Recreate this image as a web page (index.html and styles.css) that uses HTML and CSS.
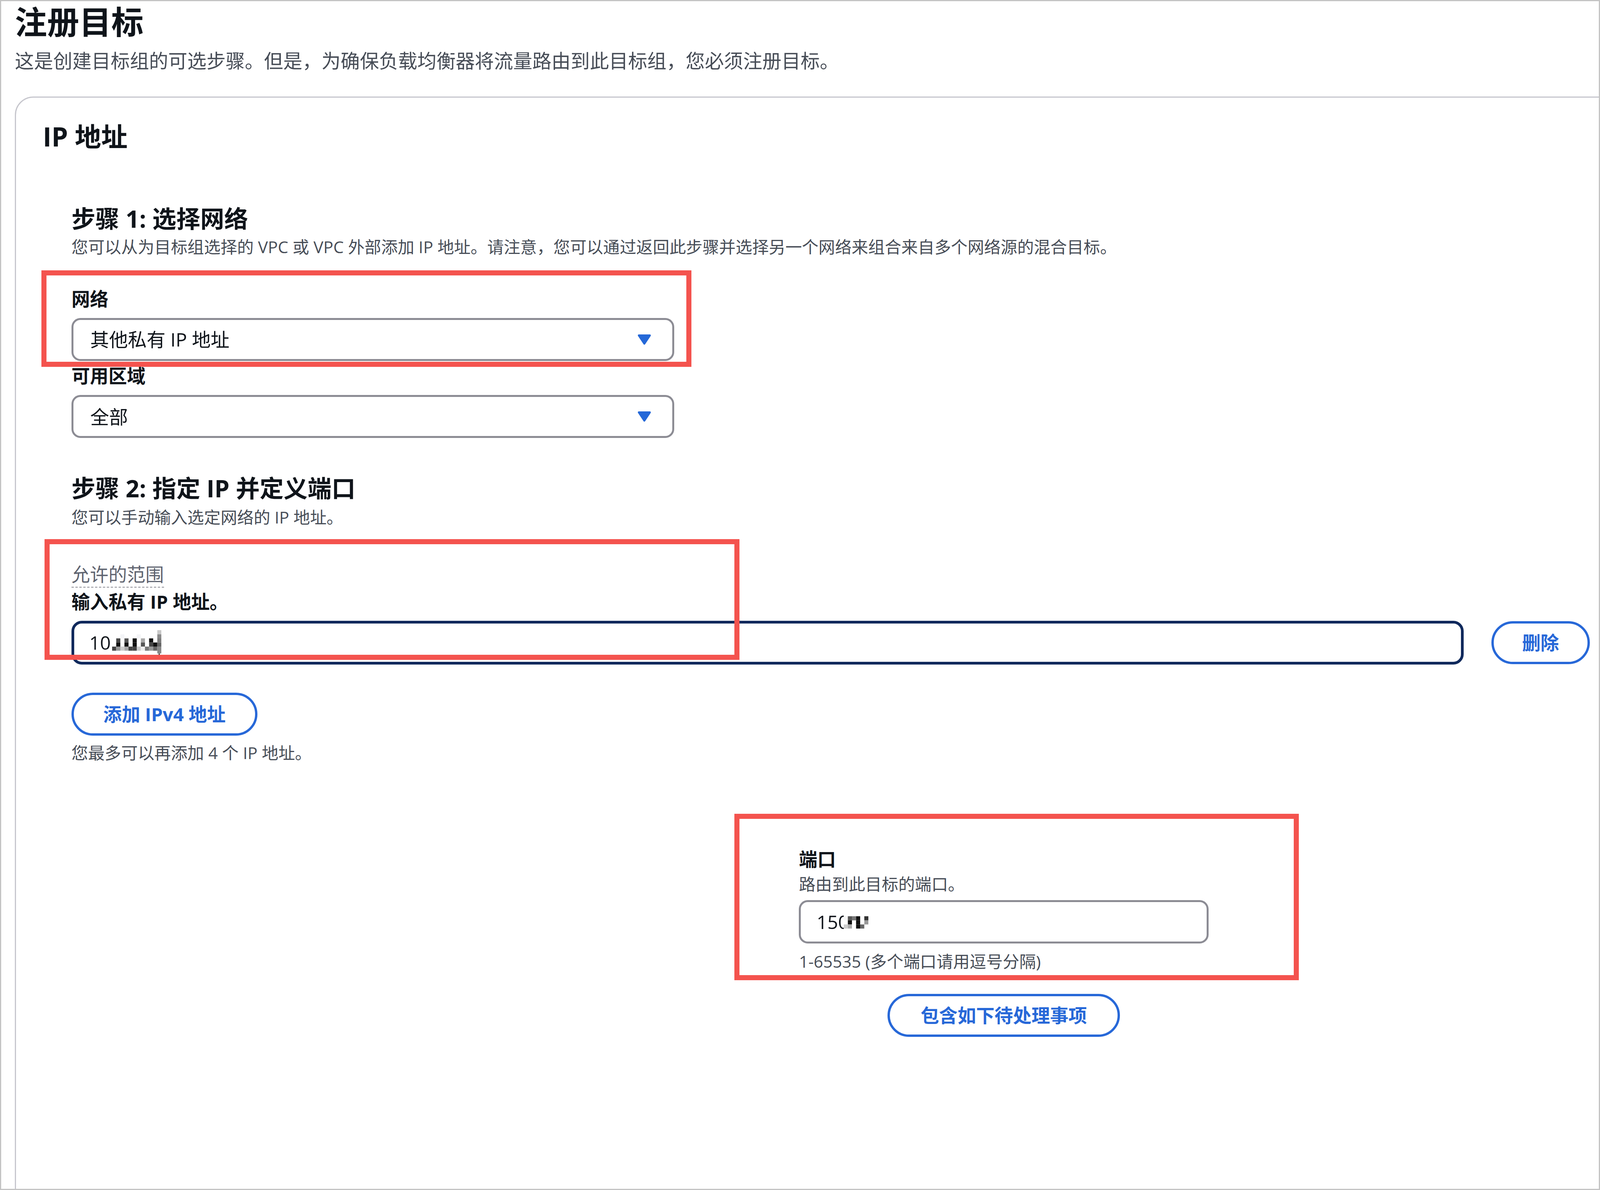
FILE: index.html
```html
<!DOCTYPE html>
<html lang="zh-CN">
<head>
<meta charset="utf-8">
<title>注册目标</title>
<link rel="stylesheet" href="styles.css">
</head>
<body>
<div class="page">
  <header class="page-head">
    <h1 class="title">注册目标</h1>
    <p class="subtitle">这是创建目标组的可选步骤。但是，为确保负载均衡器将流量路由到此目标组，您必须注册目标。</p>
  </header>

  <section class="card">
    <h2 class="card-title">IP 地址</h2>
    <div class="card-body">
      <div class="step">
        <h3 class="step-title">步骤 1: 选择网络</h3>
        <p class="desc">您可以从为目标组选择的 VPC 或 VPC 外部添加 IP 地址。请注意，您可以通过返回此步骤并选择另一个网络来组合来自多个网络源的混合目标。</p>
      </div>

      <div class="field field-network">
        <div class="field-label">网络</div>
        <div class="select">
          <span class="select-value">其他私有 IP 地址</span>
          <svg class="caret" viewBox="0 0 40 32"><polygon points="4,4 36,4 20,28" fill="#2568d8" stroke="#2568d8" stroke-width="6" stroke-linejoin="round"/></svg>
        </div>
      </div>

      <div class="field field-zone">
        <div class="field-label">可用区域</div>
        <div class="select">
          <span class="select-value">全部</span>
          <svg class="caret" viewBox="0 0 40 32"><polygon points="4,4 36,4 20,28" fill="#2568d8" stroke="#2568d8" stroke-width="6" stroke-linejoin="round"/></svg>
        </div>
      </div>

      <div class="step step-two">
        <h3 class="step-title">步骤 2: 指定 IP 并定义端口</h3>
        <p class="desc">您可以手动输入选定网络的 IP 地址。</p>
      </div>

      <div class="field field-ip">
        <div class="info-label"><span class="info-link">允许的范围</span></div>
        <div class="field-label field-label-tight">输入私有 IP 地址。</div>
        <div class="ip-row">
          <div class="input input-focused">
            <span class="input-value">10</span>
            <svg class="mosaic mosaic-ip" viewBox="0 0 144 72">
              <rect x="132" y="0" width="12" height="12" fill="#c8c8c8"/>
              <rect x="24" y="12" width="12" height="12" fill="#f4f5f7"/>
              <rect x="72" y="12" width="12" height="12" fill="#f4f5f7"/>
              <rect x="132" y="12" width="12" height="12" fill="#8a8a8a"/>
              <rect x="12" y="24" width="12" height="12" fill="#464646"/>
              <rect x="36" y="24" width="12" height="12" fill="#555555"/>
              <rect x="60" y="24" width="12" height="12" fill="#111111"/>
              <rect x="84" y="24" width="12" height="12" fill="#a8a8a8"/>
              <rect x="108" y="24" width="12" height="12" fill="#111111"/>
              <rect x="132" y="24" width="12" height="12" fill="#7d7d7d"/>
              <rect x="12" y="36" width="12" height="12" fill="#111111"/>
              <rect x="36" y="36" width="12" height="12" fill="#111111"/>
              <rect x="60" y="36" width="12" height="12" fill="#111111"/>
              <rect x="84" y="36" width="12" height="12" fill="#555555"/>
              <rect x="108" y="36" width="12" height="12" fill="#444444"/>
              <rect x="120" y="36" width="12" height="12" fill="#111111"/>
              <rect x="132" y="36" width="12" height="12" fill="#666666"/>
              <rect x="0" y="48" width="12" height="12" fill="#444444"/>
              <rect x="12" y="48" width="12" height="12" fill="#999999"/>
              <rect x="24" y="48" width="12" height="12" fill="#cccccc"/>
              <rect x="36" y="48" width="12" height="12" fill="#aaaaaa"/>
              <rect x="48" y="48" width="12" height="12" fill="#444444"/>
              <rect x="60" y="48" width="12" height="12" fill="#444444"/>
              <rect x="72" y="48" width="12" height="12" fill="#cccccc"/>
              <rect x="84" y="48" width="12" height="12" fill="#eeeeee"/>
              <rect x="96" y="48" width="12" height="12" fill="#777777"/>
              <rect x="108" y="48" width="12" height="12" fill="#999999"/>
              <rect x="120" y="48" width="12" height="12" fill="#666666"/>
              <rect x="132" y="48" width="12" height="20" fill="#888888"/>
              <rect x="136" y="68" width="3" height="4" fill="#222222"/>
            </svg>
          </div>
          <button class="btn btn-remove" type="button">删除</button>
        </div>
      </div>

      <div class="field field-add">
        <button class="btn btn-add" type="button">添加 IPv4 地址</button>
        <p class="desc desc-hint">您最多可以再添加 4 个 IP 地址。</p>
      </div>

      <div class="port">
        <div class="field-label">端口</div>
        <p class="desc port-desc">路由到此目标的端口。</p>
        <div class="input input-port">
          <span class="input-value">150</span>
          <svg class="mosaic mosaic-port" viewBox="0 0 72 44">
            <rect x="0" y="0" width="72" height="44" fill="#ffffff"/>
            <rect x="0" y="6" width="12" height="12" fill="#f6f6f6"/>
            <rect x="12" y="6" width="12" height="12" fill="#555555"/>
            <rect x="24" y="6" width="12" height="12" fill="#777777"/>
            <rect x="36" y="6" width="12" height="12" fill="#111111"/>
            <rect x="60" y="6" width="12" height="12" fill="#333333"/>
            <rect x="12" y="18" width="12" height="12" fill="#111111"/>
            <rect x="36" y="18" width="12" height="12" fill="#111111"/>
            <rect x="60" y="18" width="12" height="12" fill="#999999"/>
            <rect x="0" y="30" width="12" height="12" fill="#cccccc"/>
            <rect x="12" y="30" width="12" height="12" fill="#aaaaaa"/>
            <rect x="36" y="30" width="12" height="12" fill="#111111"/>
            <rect x="48" y="30" width="12" height="12" fill="#666666"/>
          </svg>
        </div>
        <p class="desc port-hint">1-65535 (多个端口请用逗号分隔)</p>
        <button class="btn btn-pending" type="button">包含如下待处理事项</button>
      </div>
    </div>
  </section>

  <div class="mark mark-network"></div>
  <div class="mark mark-ip"></div>
  <div class="mark mark-port"></div>
</div>
</body>
</html>
```

FILE: styles.css
```css
/* 1rem = 100 reference pixels; the page scales with the viewport width */
* {
  box-sizing: border-box;
}

html {
  font-size: calc(100vw / 46.74);
}

html,
body {
  margin: 0;
  padding: 0;
  background: #ffffff;
  overflow: hidden;
}

body {
  font-family: "Open Sans", "Noto Sans CJK SC", sans-serif;
  font-size: 0.48rem;
  color: #0f141a;
}

.page {
  position: relative;
  width: 46.74rem;
  height: 30.46rem;
  min-height: 100vh;
  border: 0.04rem solid #c4c4c4;
  padding: 0 0 0 0.4rem;
  overflow: hidden;
  background: #ffffff;
}

.title {
  margin: 0;
  font-size: 0.94rem;
  line-height: 1.2rem;
  font-weight: 700;
  color: #0f141a;
}

.subtitle {
  margin: 0.19rem 0 0;
  font-size: 0.56rem;
  line-height: 0.7rem;
  color: #474d57;
}

.card {
  margin: 0.69rem -4rem 0 0;
  height: 40rem;
  border: 0.04rem solid #c6c6cd;
  border-radius: 0.54rem;
  padding: 0.64rem 0 0 0.78rem;
}

.card-title {
  margin: 0;
  font-size: 0.77rem;
  line-height: 1rem;
  font-weight: 700;
}

.card-body {
  margin-left: 0.84rem;
  width: 44.35rem;
}

.step-title {
  margin: 1.48rem 0 0;
  font-size: 0.7rem;
  line-height: 0.84rem;
  font-weight: 700;
}

.step-two .step-title {
  margin-top: 1.05rem;
}

.desc {
  margin: 0.11rem 0 0;
  font-size: 0.484rem;
  line-height: 0.6rem;
  color: #474d57;
}

.step-two .desc {
  margin-top: 0.12rem;
}

.field-network {
  margin-top: 0.88rem;
}

.field-zone {
  margin-top: 0.1rem;
}

.field-label {
  font-size: 0.54rem;
  line-height: 0.66rem;
  font-weight: 700;
  color: #0f141a;
}

.select {
  margin-top: 0.23rem;
  width: 17.61rem;
  height: 1.26rem;
  border: 0.06rem solid #8c8c94;
  border-radius: 0.26rem;
  padding: 0 0.62rem 0 0.49rem;
  display: flex;
  align-items: center;
  justify-content: space-between;
}

.select-value {
  font-size: 0.55rem;
  line-height: 0.7rem;
  color: #0f141a;
}

.caret {
  display: block;
  flex: none;
  width: 0.4rem;
  height: 0.32rem;
}

.field-ip {
  margin-top: 1.04rem;
}

.info-label {
  font-size: 0.54rem;
  line-height: 0.66rem;
  color: #5f6470;
}

.info-link {
  border-bottom: 0.03rem dashed #8c8c94;
}

.field-label-tight {
  margin-top: 0.14rem;
}

.ip-row {
  margin-top: 0.23rem;
  display: flex;
  align-items: center;
  gap: 0.81rem;
}

.input {
  height: 1.27rem;
  border-radius: 0.3rem;
  display: flex;
  align-items: center;
}

.input-focused {
  flex: 0 0 40.67rem;
  border: 0.08rem solid #10295c;
  padding-left: 0.44rem;
}

.input-value {
  font-size: 0.55rem;
  line-height: 0.7rem;
  color: #0f141a;
}

.mosaic {
  display: block;
  flex: none;
}

.mosaic-ip {
  width: 1.44rem;
  height: 0.72rem;
  margin-left: 0.04rem;
}

.mosaic-port {
  width: 0.72rem;
  height: 0.44rem;
  margin-left: -0.15rem;
}

.btn {
  height: 1.26rem;
  border: 0.07rem solid #2768d8;
  border-radius: 0.63rem;
  background: #ffffff;
  color: #2768d8;
  font-family: "Open Sans", "Noto Sans CJK SC", sans-serif;
  font-size: 0.54rem;
  font-weight: 700;
  line-height: 0.66rem;
  padding: 0;
  display: flex;
  align-items: center;
  justify-content: center;
}

.btn-remove {
  flex: 0 0 2.87rem;
  width: 2.87rem;
}

.field-add {
  margin-top: 0.82rem;
}

.btn-add {
  width: 5.43rem;
}

.desc-hint {
  margin-top: 0.21rem;
}

.port {
  margin: 2.47rem 0 0 21.25rem;
  width: 11.97rem;
  display: flex;
  flex-direction: column;
}

.port-desc {
  margin-top: 0.1rem;
}

.input-port {
  margin-top: 0.17rem;
  height: 1.26rem;
  border: 0.06rem solid #8c8c94;
  border-radius: 0.26rem;
  padding-left: 0.46rem;
}

.port-hint {
  margin-top: 0.23rem;
}

.btn-pending {
  margin-top: 0.64rem;
  align-self: center;
  width: 6.79rem;
}

.mark {
  position: absolute;
  border: 0.15rem solid #f4534e;
  pointer-events: none;
}

.mark-network {
  left: 1.17rem;
  top: 7.86rem;
  width: 18.99rem;
  height: 2.82rem;
}

.mark-ip {
  left: 1.27rem;
  top: 15.71rem;
  width: 20.3rem;
  height: 3.53rem;
}

.mark-port {
  left: 21.42rem;
  top: 23.73rem;
  width: 16.49rem;
  height: 4.87rem;
}
```
